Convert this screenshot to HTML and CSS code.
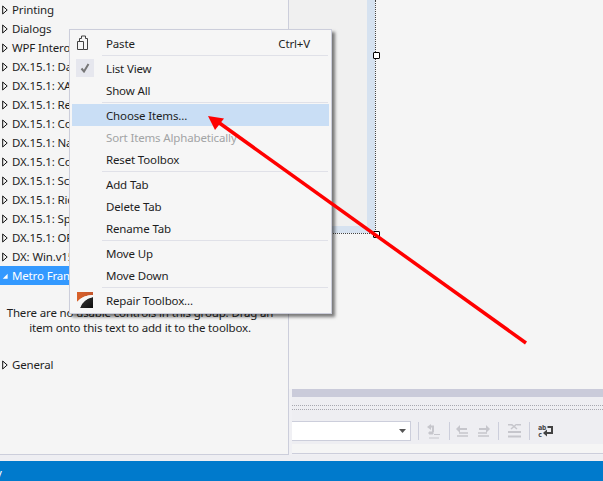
FILE: index.html
```html
<!DOCTYPE html>
<html lang="en">
<head>
    <meta charset="UTF-8">
    <meta name="viewport" content="width=device-width, initial-scale=1.0">
    <title>Toolbox context menu</title>
    <link rel="stylesheet" href="styles.css">
</head>
<body>
    <svg class="defs" width="0" height="0">
        <symbol id="closed" viewBox="0 0 6 10"><path d="M.7 1 5.200 5 .7 9Z" fill="#f5f5f5" stroke="#111"/></symbol>
    </svg>
    <div class="app">
        <div class="workspace">
            <!-- toolbox -->
            <aside class="toolbox">
                <div class="tab"><svg class="twist"><use href="#closed"/></svg>Printing</div>
                <div class="tab"><svg class="twist"><use href="#closed"/></svg>Dialogs</div>
                <div class="tab"><svg class="twist"><use href="#closed"/></svg>WPF Interoperability</div>
                <div class="tab"><svg class="twist"><use href="#closed"/></svg>DX.15.1: Data</div>
                <div class="tab"><svg class="twist"><use href="#closed"/></svg>DX.15.1: XAF</div>
                <div class="tab"><svg class="twist"><use href="#closed"/></svg>DX.15.1: Reporting</div>
                <div class="tab"><svg class="twist"><use href="#closed"/></svg>DX.15.1: Common</div>
                <div class="tab"><svg class="twist"><use href="#closed"/></svg>DX.15.1: Navigation</div>
                <div class="tab"><svg class="twist"><use href="#closed"/></svg>DX.15.1: Components</div>
                <div class="tab"><svg class="twist"><use href="#closed"/></svg>DX.15.1: Scheduling</div>
                <div class="tab"><svg class="twist"><use href="#closed"/></svg>DX.15.1: Rich Edit</div>
                <div class="tab"><svg class="twist"><use href="#closed"/></svg>DX.15.1: Spreadsheet</div>
                <div class="tab"><svg class="twist"><use href="#closed"/></svg>DX.15.1: OFFICE</div>
                <div class="tab"><svg class="twist"><use href="#closed"/></svg>DX: Win.v15.1</div>
                <div class="tab selected"><svg class="twist" viewBox="0 0 8 10"><path d="M7.500 2v6.500H1Z" fill="#fff"/></svg>Metro Framework</div>
                <p class="empty">There are no usable controls in this group. Drag an<br>item onto this text to add it to the toolbox.</p>
                <div class="tab"><svg class="twist"><use href="#closed"/></svg>General</div>
            </aside>

            <!-- designer and tool strip -->
            <main class="editor">
                <div class="surface">
                    <div class="selection">
                        <div class="form"></div>
                        <span class="handle mid"></span>
                        <span class="handle corner"></span>
                    </div>
                </div>
                <div class="band"></div>
                <div class="tray">
                    <div class="dots"></div>
                    <div class="strip">
                        <div class="combo"><svg class="caret" width="7" height="4"><path d="M0 0h7L3.500 4Z" fill="#555"/></svg></div>
                        <span class="bar"></span>
                        <svg class="tool first" width="13" height="15" viewBox="0 0 13 15"><path d="M6 8V2.500H3.500" fill="none" stroke="#c6c6cc" stroke-width="2"/><path d="M4 0v6L0 3Z" fill="#c6c6cc"/><path d="M2 8h4v2H2ZM7 10.500h6M2 14h10" stroke="#c6c6cc" fill="#c6c6cc"/></svg>
                        <span class="bar"></span>
                        <svg class="tool" width="12" height="12" viewBox="0 0 12 12"><path d="M4 0v3h7v2H4v3L0 4Z" fill="#c6c6cc"/><path d="M3 8h9M1 11h11" stroke="#c6c6cc" stroke-width="1.500"/></svg>
                        <svg class="tool gap" width="12" height="12" viewBox="0 0 12 12"><path d="M8 0v3H1v2h7v3l4-4Z" fill="#c6c6cc"/><path d="M0 8h9M0 11h11" stroke="#c6c6cc" stroke-width="1.500"/></svg>
                        <span class="bar wide"></span>
                        <svg class="tool" width="13" height="14" viewBox="0 0 13 14"><path d="M0 .5h4M9 .500h4M0 8h13M0 12.500h13" stroke="#c6c6cc" stroke-width="2"/><path d="m3 0 6 5M9 0 3 5" stroke="#c6c6cc" stroke-width="1.500"/></svg>
                        <span class="bar last"></span>
                        <svg class="tool" width="15" height="13" viewBox="0 0 15 13"><path d="M9.500 2H14v6H7" fill="none" stroke="#424242" stroke-width="2"/><path d="M9 4.500v7L5 8Z" fill="#424242"/><text class="wrap-ab" x="0" y="5">ab</text><text class="wrap-ab" x="0" y="12">c</text></svg>
                    </div>
                </div>
                <div class="foot"></div>
            </main>
        </div>
        <footer class="status"><span>y</span></footer>

        <!-- context menu -->
        <div class="menu">
            <div class="item">
                <span class="slot"><svg width="14" height="16" viewBox="0 0 14 16"><path d="M.5 6.500h6v8h-6ZM2.500 6V3.500h2V1h4v2.500h2v11h-4" fill="none" stroke="#424242"/></svg></span>
                <span class="label">Paste</span><span class="keys">Ctrl+V</span>
            </div>
            <div class="sep"></div>
            <div class="item">
                <span class="slot"><span class="check"><svg width="10" height="10" viewBox="0 0 10 10"><path d="M1.500 5.500 4 8.500 8.500 1" fill="none" stroke="#777" stroke-width="2"/></svg></span></span>
                <span class="label">List View</span>
            </div>
            <div class="item"><span class="slot"></span><span class="label">Show All</span></div>
            <div class="sep"></div>
            <div class="item active"><span class="slot"></span><span class="label">Choose Items...</span></div>
            <div class="item disabled"><span class="slot"></span><span class="label">Sort Items Alphabetically</span></div>
            <div class="item"><span class="slot"></span><span class="label">Reset Toolbox</span></div>
            <div class="sep"></div>
            <div class="item"><span class="slot"></span><span class="label">Add Tab</span></div>
            <div class="item"><span class="slot"></span><span class="label">Delete Tab</span></div>
            <div class="item"><span class="slot"></span><span class="label">Rename Tab</span></div>
            <div class="sep"></div>
            <div class="item"><span class="slot"></span><span class="label">Move Up</span></div>
            <div class="item"><span class="slot"></span><span class="label">Move Down</span></div>
            <div class="sep"></div>
            <div class="item">
                <span class="slot">
                    <svg width="16" height="16" viewBox="0 0 16 16">
                        <defs>
                            <linearGradient id="top" x1="0" y1="0" x2="1" y2="0"><stop offset="0" stop-color="#d9622a"/><stop offset="1" stop-color="#c4552c"/></linearGradient>
                            <linearGradient id="low" x1="0" y1="0" x2="1" y2="1"><stop offset="0" stop-color="#3a3a3a"/><stop offset="1" stop-color="#0c0c0c"/></linearGradient>
                        </defs>
                        <path d="M3 16Q5 8 16 5V16Z" fill="url(#low)"/>
                        <path d="M0 0h16v3Q6 3 0 10Z" fill="url(#top)"/>
                        <path d="M0 10Q6 3 16 3v2Q7 6 3 16H0Z" fill="#f6f6f6"/>
                    </svg>
                </span>
                <span class="label">Repair Toolbox...</span>
            </div>
        </div>

        <!-- annotation arrow -->
        <svg class="arrow" width="603" height="481">
            <path d="M526 343 218 122" stroke="#f00" stroke-width="3.500"/>
            <path d="M208 116 224 118.500 215 130Z" fill="#f00"/>
        </svg>
    </div>
</body>
</html>
```

FILE: styles.css
```css
* { box-sizing: border-box; }
html, body { margin: 0; }
body {
    font-family: "Noto Sans", "Liberation Sans", sans-serif;
    font-size: 11.5px;
    letter-spacing: -0.15px;
    color: #1e1e1e;
}
.defs { position: absolute; }

.app {
    width: 603px;
    height: 481px;
    position: relative;
    overflow: hidden;
    display: flex;
    flex-direction: column;
    background-color: #eeeef2;
}
.workspace {
    flex: 1;
    display: flex;
    min-height: 0;
}
.status {
    height: 20px;
    line-height: 24px;
    overflow: hidden;
    color: #fff;
    background-color: #007acc;
}
.status span { display: block; margin-left: -4px; }

/* toolbox */
.toolbox {
    width: 289px;
    height: 455px;
    background-color: #f5f5f5;
    border-right: 1px solid #ccceDB;
    border-bottom: 1px solid #ccceDB;
}
.tab {
    height: 19px;
    line-height: 19px;
    display: flex;
    align-items: center;
    white-space: nowrap;
}
.twist {
    width: 6px;
    height: 10px;
    margin: 1px 4px 0 2px;
    flex-shrink: 0;
}
.tab.selected {
    color: #fff;
    background-color: #3399ff;
}
.empty {
    margin: 20px 0 20px;
    padding: 0 8px 0 0;
    height: 30px;
    line-height: 15px;
    text-align: center;
    white-space: nowrap;
}

/* designer */
.editor {
    flex: 1;
    min-width: 0;
    height: 455px;
    display: flex;
    flex-direction: column;
    background-color: #f0f0f4;
}
.surface {
    height: 389px;
    background-color: #f5f5f5;
}
.selection {
    width: 87px;
    height: 234px;
    position: relative;
    border-right: 1px dotted #444;
    border-bottom: 1px dotted #444;
}
.form {
    height: 233px;
    background-color: #f0f0f0;
    border-right: 8px solid #d6e2f0;
    border-bottom: 7px solid #d6e2f0;
}
.handle {
    position: absolute;
    width: 7px;
    height: 7px;
    right: -5px;
    background-color: #fff;
    border: 1px solid #000;
    border-radius: 1px;
}
.handle.mid { top: 52px; }
.handle.corner { bottom: -5px; }

.band {
    height: 8px;
    margin-left: 3px;
    background-color: #cacbda;
}
.tray {
    height: 47px;
    margin-left: 3px;
    background-color: #eeeef2;
}
.dots {
    height: 5px;
    margin-top: 8px;
    border-top: 1px dotted #a8a8b0;
    border-bottom: 1px dotted #a8a8b0;
}
.strip {
    margin-top: 11px;
    display: flex;
    align-items: center;
    height: 20px;
}
.combo {
    width: 119px;
    height: 20px;
    display: flex;
    align-items: center;
    justify-content: flex-end;
    padding-right: 4px;
    background-color: #fff;
    border: 1px solid #ccceDB;
    border-left: 0;
}
.bar {
    width: 1px;
    height: 18px;
    margin: 0 6px 0 7px;
    background-color: #ccceDB;
}
.bar.wide { margin-left: 8px; margin-right: 9px; }
.bar.last { margin-left: 8px; margin-right: 8px; }
.tool { flex-shrink: 0; }
.tool.first { margin: 0 2px 0 2px; }
.tool.gap { margin-left: 10px; }
.wrap-ab {
    font-family: "DejaVu Sans Mono", monospace;
    font-size: 7px;
    font-weight: 700;
    fill: #424242;
}
.foot {
    height: 10px;
    margin-left: 3px;
    background-color: #f5f5f5;
    border-bottom: 1px solid #ccceDB;
}

/* context menu */
.menu {
    position: absolute;
    left: 69px;
    top: 29px;
    width: 263px;
    height: 285px;
    padding: 2px;
    background-color: #f6f6f6;
    border: 1px solid #ccceDB;
    box-shadow: 3px 3px 3px rgba(0, 0, 0, 0.5);
}
.item {
    height: 22px;
    display: flex;
    align-items: center;
    padding-right: 19px;
}
.item.active { background-color: #c9def5; }
.item.disabled { color: #a2a4a5; }
.slot {
    width: 34px;
    height: 22px;
    padding-left: 4px;
    display: flex;
    align-items: center;
    flex-shrink: 0;
}
.slot > svg { margin-left: 1px; }
.check {
    width: 18px;
    height: 18px;
    display: flex;
    align-items: center;
    justify-content: center;
    background-color: #e6e7ee;
}
.label { flex: 1; white-space: nowrap; }
.sep {
    height: 3px;
    margin: 0 1px 0 30px;
    padding-top: 1px;
}
.sep::before {
    content: '';
    display: block;
    height: 1px;
    background-color: #e0e1e8;
}

.arrow {
    position: absolute;
    left: 0;
    top: 0;
    pointer-events: none;
}
```
